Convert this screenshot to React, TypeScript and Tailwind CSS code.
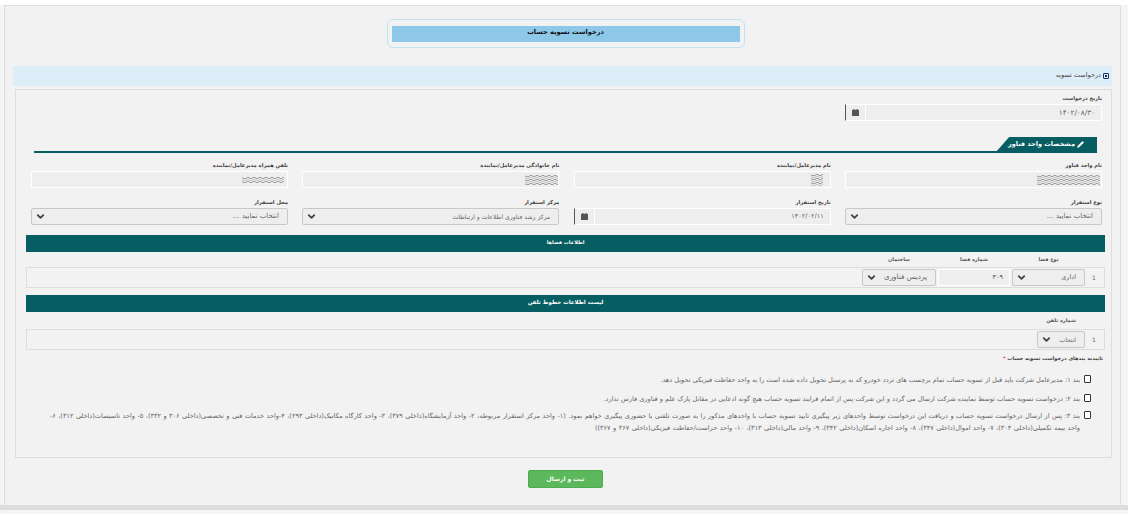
import React from "react";
import { ChevronDown, Pencil } from "lucide-react";

const FONT = "font-['DejaVu_Sans',sans-serif]";

function Scribble({ w, h = 10 }: { w: number; h?: number }) {
  const lines = [];
  for (let i = 0; i < Math.floor(h / 2); i++) {
    const y = 1 + i * 2;
    let d = `M0 ${y}`;
    for (let x = 3; x <= w; x += 3) d += ` L${x} ${y + (x % 2 ? 0.8 : -0.8)}`;
    lines.push(<path key={i} d={d} stroke={i % 2 ? "#c4c4c4" : "#9a9a9a"} strokeWidth="1" fill="none" />);
  }
  return (
    <svg width={w} height={h} viewBox={`0 0 ${w} ${h}`}>
      {lines}
    </svg>
  );
}

function Label({ children }: { children: React.ReactNode }) {
  return <div className="text-[5.2px] leading-[8px] font-bold text-[#444] h-[8px]">{children}</div>;
}

function Input({ children, className = "" }: { children?: React.ReactNode; className?: string }) {
  return (
    <div className={`h-[17px] bg-[#eeeeee] border border-white leading-[15px] text-[#666] px-[6px] flex items-center overflow-hidden ${className}`}>
      {children}
    </div>
  );
}

function DateInput({ value, className = "" }: { value: string; className?: string }) {
  return (
    <div className="flex h-[17px]">
      <Input className={`flex-1 ${className}`}>{value}</Input>
      <div className="w-[20px] h-[17px] bg-[#eeeeee] border-l border-l-[#555] border-y border-y-white flex items-center justify-center">
        <svg width="7" height="7" viewBox="0 0 7 7">
          <rect x="0" y="0.8" width="7" height="6.2" fill="#555" />
          <rect x="1.4" y="0" width="1" height="1.4" fill="#555" />
          <rect x="4.6" y="0" width="1" height="1.4" fill="#555" />
        </svg>
      </div>
    </div>
  );
}

function Select({ value, className = "" }: { value: string; className?: string }) {
  return (
    <div className={`h-[17px] bg-[#eeeeee] border border-[#c8c8c8] rounded-[2px] text-[#666] flex items-center justify-between pr-[8px] pl-[3px] ${className}`}>
      <span className="whitespace-nowrap">{value}</span>
      <ChevronDown size={11} strokeWidth={4} color="#444" />
    </div>
  );
}

function Field({ label, children }: { label: string; children: React.ReactNode }) {
  return (
    <div className="flex flex-col gap-[2px]">
      <Label>{label}</Label>
      {children}
    </div>
  );
}

function Band({ children, className = "" }: { children: React.ReactNode; className?: string }) {
  return (
    <div className={`h-[17px] bg-[#065e62] text-white font-bold flex items-center justify-center leading-[14px] pb-[3px] ${className}`}>
      {children}
    </div>
  );
}

function Check({ children, className = "" }: { children: React.ReactNode; className?: string }) {
  return (
    <div className="flex items-start gap-[4px]">
      <div className="w-[7px] h-[8px] shrink-0 border border-[#333] rounded-[1px] bg-white" />
      <p className={`text-[6.55px] leading-[12px] text-[#666] flex-1 -mt-[1px] ${className}`}>{children}</p>
    </div>
  );
}

export default function App() {
  return (
    <div dir="rtl" className={`${FONT} w-[1128px] h-[514px] bg-[#f5f5f5] overflow-hidden relative`}>
      <div className="h-[5px] bg-white" />
      <div className="w-[1117px] h-[500px] mr-[7px] bg-[#f2f2f2] border-t border-x border-[#dddddd] flex flex-col">
        {/* Title */}
        <div className="flex justify-center pt-[13px] pl-[6px]">
          <div className="w-[358px] h-[29px] border border-[#bfe6f0] rounded-[6px] flex items-center justify-center px-[4px]">
            <div className="w-full h-[16px] bg-[#8dc8e8] text-[#111] text-[6.6px] font-bold flex items-center justify-center pb-[2px]">
              درخواست تسویه حساب
            </div>
          </div>
        </div>

        {/* Accordion header */}
        <div className="h-[20px] mt-[18px] mx-[8px] bg-[#deeef9] flex items-center gap-[2px] pr-[3px] text-[6.5px] text-[#444]">
          <div className="w-[6px] h-[6px] border border-[#1a2a6c] rounded-[1px] flex items-center justify-center">
            <div className="w-[2px] h-[2px] bg-[#1a2a6c]" />
          </div>
          <span>درخواست تسویه</span>
        </div>

        {/* Panel */}
        <div className="mt-[3px] mr-[8px] ml-[10px] h-[369px] border border-[#dddddd] pt-[4px] pr-[9px] pl-[15px] flex flex-col">
          <div className="w-[257px]">
            <Field label="تاریخ درخواست">
              <DateInput value="۱۴۰۲/۰۸/۳۰" className="text-[7.3px]" />
            </Field>
          </div>

          {/* Section tab */}
          <div className="mt-[16px] mr-[5px] ml-[3px] border-b-2 border-[#065e62] h-[16px] flex">
            <div className="w-[101px] h-[15px] bg-[#065e62] text-white text-[6.5px] font-bold flex items-center gap-[2px] pr-[13px] [clip-path:polygon(13%_0,100%_0,100%_100%,0_100%)]">
              <Pencil size={7} fill="white" strokeWidth={2} />
              <span className="whitespace-nowrap">مشخصات واحد فناور</span>
            </div>
          </div>

          <div className="grid grid-cols-4 gap-x-[14.33px] gap-y-[10px] mt-[8px]">
            <Field label="نام واحد فناور">
              <Input className="!px-0"><Scribble w={64} /></Input>
            </Field>
            <Field label="نام مدیرعامل/نماینده">
              <Input className="!pr-[5px]"><Scribble w={14} h={12} /></Input>
            </Field>
            <Field label="نام خانوادگی مدیرعامل/نماینده">
              <Input className="!px-0"><Scribble w={33} /></Input>
            </Field>
            <Field label="تلفن همراه مدیرعامل/نماینده">
              <Input className="!pr-[3px]"><Scribble w={42} h={6} /></Input>
            </Field>

            <Field label="نوع استقرار">
              <Select value="انتخاب نمایید ..." className="text-[7px]" />
            </Field>
            <Field label="تاریخ استقرار">
              <DateInput value="۱۴۰۲/۰۲/۱۱" className="text-[6.5px]" />
            </Field>
            <Field label="مرکز استقرار">
              <Select value="مرکز رشد فناوری اطلاعات و ارتباطات" className="text-[6.1px]" />
            </Field>
            <Field label="محل استقرار">
              <Select value="انتخاب نمایید ..." className="text-[7px]" />
            </Field>
          </div>

          <div className="-mr-[3px] -ml-[5px] mt-[10px]">
            <Band className="text-[5px]">اطلاعات فضاها</Band>

            <div className="flex gap-[2px] text-[5px] font-bold text-[#555] h-[15px] items-center pr-[20px] pt-[1px]">
              <div className="w-[73px] text-center">نوع فضا</div>
              <div className="w-[72px] text-center">شماره فضا</div>
              <div className="w-[74px] text-center">ساختمان</div>
            </div>
            <div className="h-[21px] border border-[#dddddd] flex items-center pr-[4px] gap-[2px]">
              <span className="w-[12px] ml-[1px] text-[6px] text-[#666] text-center">1</span>
              <Select value="اداری" className="w-[73px] text-[6.5px]" />
              <Input className="w-[72px] text-[6.5px] !text-[#555]">۳۰۹</Input>
              <Select value="پردیس فناوری" className="w-[74px] text-[7.2px]" />
            </div>

            <div className="mt-[7px]">
              <Band className="text-[5.5px]">لیست اطلاعات خطوط تلفن</Band>
            </div>

            <div className="flex text-[5px] font-bold text-[#555] h-[17px] items-center pr-[20px]">
              <div className="w-[48px] text-center">شماره تلفن</div>
            </div>
            <div className="h-[21px] border border-[#dddddd] flex items-center pr-[4px] gap-[2px]">
              <span className="w-[12px] ml-[1px] text-[6px] text-[#666] text-center">1</span>
              <Select value="انتخاب" className="w-[48px] text-[6px]" />
            </div>
          </div>

          <div className="mt-[4px] -mr-[1px] text-[5.1px] font-bold text-[#444] leading-[9px]">
            تاییدیه بندهای درخواست تسویه حساب <span className="text-[#d9534f]">*</span>
          </div>

          <div className="mt-[12px] mr-[11px] ml-[15px] flex flex-col">
            <Check>بند ۱: مدیرعامل شرکت باید قبل از تسویه حساب تمام برچسب های تردد خودرو که به پرسنل تحویل داده شده است را به واحد حفاظت فیزیکی تحویل دهد.</Check>
            <div className="h-[8px]" />
            <Check>بند ۲: درخواست تسویه حساب توسط نماینده شرکت ارسال می گردد و این شرکت پس از اتمام فرایند تسویه حساب هیچ گونه ادعایی در مقابل پارک علم و فناوری فارس ندارد.</Check>
            <div className="h-[6px]" />
            <Check className="[word-spacing:0.35px]">بند ۳: پس از ارسال درخواست تسویه حساب و دریافت این درخواست توسط واحدهای زیر پیگیری تایید تسویه حساب با واحدهای مذکور را به صورت تلفنی یا حضوری پیگیری خواهم نمود. (۱- واحد مرکز استقرار مربوطه، ۲- واحد آزمایشگاه(داخلی ۳۷۹)، ۳- واحد کارگاه مکانیک(داخلی ۲۹۳)، ۴-واحد خدمات فنی و تخصصی(داخلی ۳۰۶ و ۳۳۲)، ۵- واحد تاسیسات(داخلی ۳۱۲)، ۶- واحد بیمه تکمیلی(داخلی ۳۰۴)، ۷- واحد اموال(داخلی ۳۴۷)، ۸- واحد اجاره اسکان(داخلی ۳۴۲)، ۹- واحد مالی(داخلی ۳۱۳)، ۱۰- واحد حراست/حفاظت فیزیکی(داخلی ۳۶۷ و ۳۶۷))</Check>
          </div>
        </div>

        {/* Submit */}
        <div className="flex justify-center mt-[12px] pl-[6px]">
          <button className="w-[75px] h-[18px] bg-[#5cb85c] border border-[#4cae4c] rounded-[2px] text-white text-[6px] font-bold pb-[2px]">
            ثبت و ارسال
          </button>
        </div>
      </div>
      <div className="h-[5px] bg-[#dddddd]" />
    </div>
  );
}
